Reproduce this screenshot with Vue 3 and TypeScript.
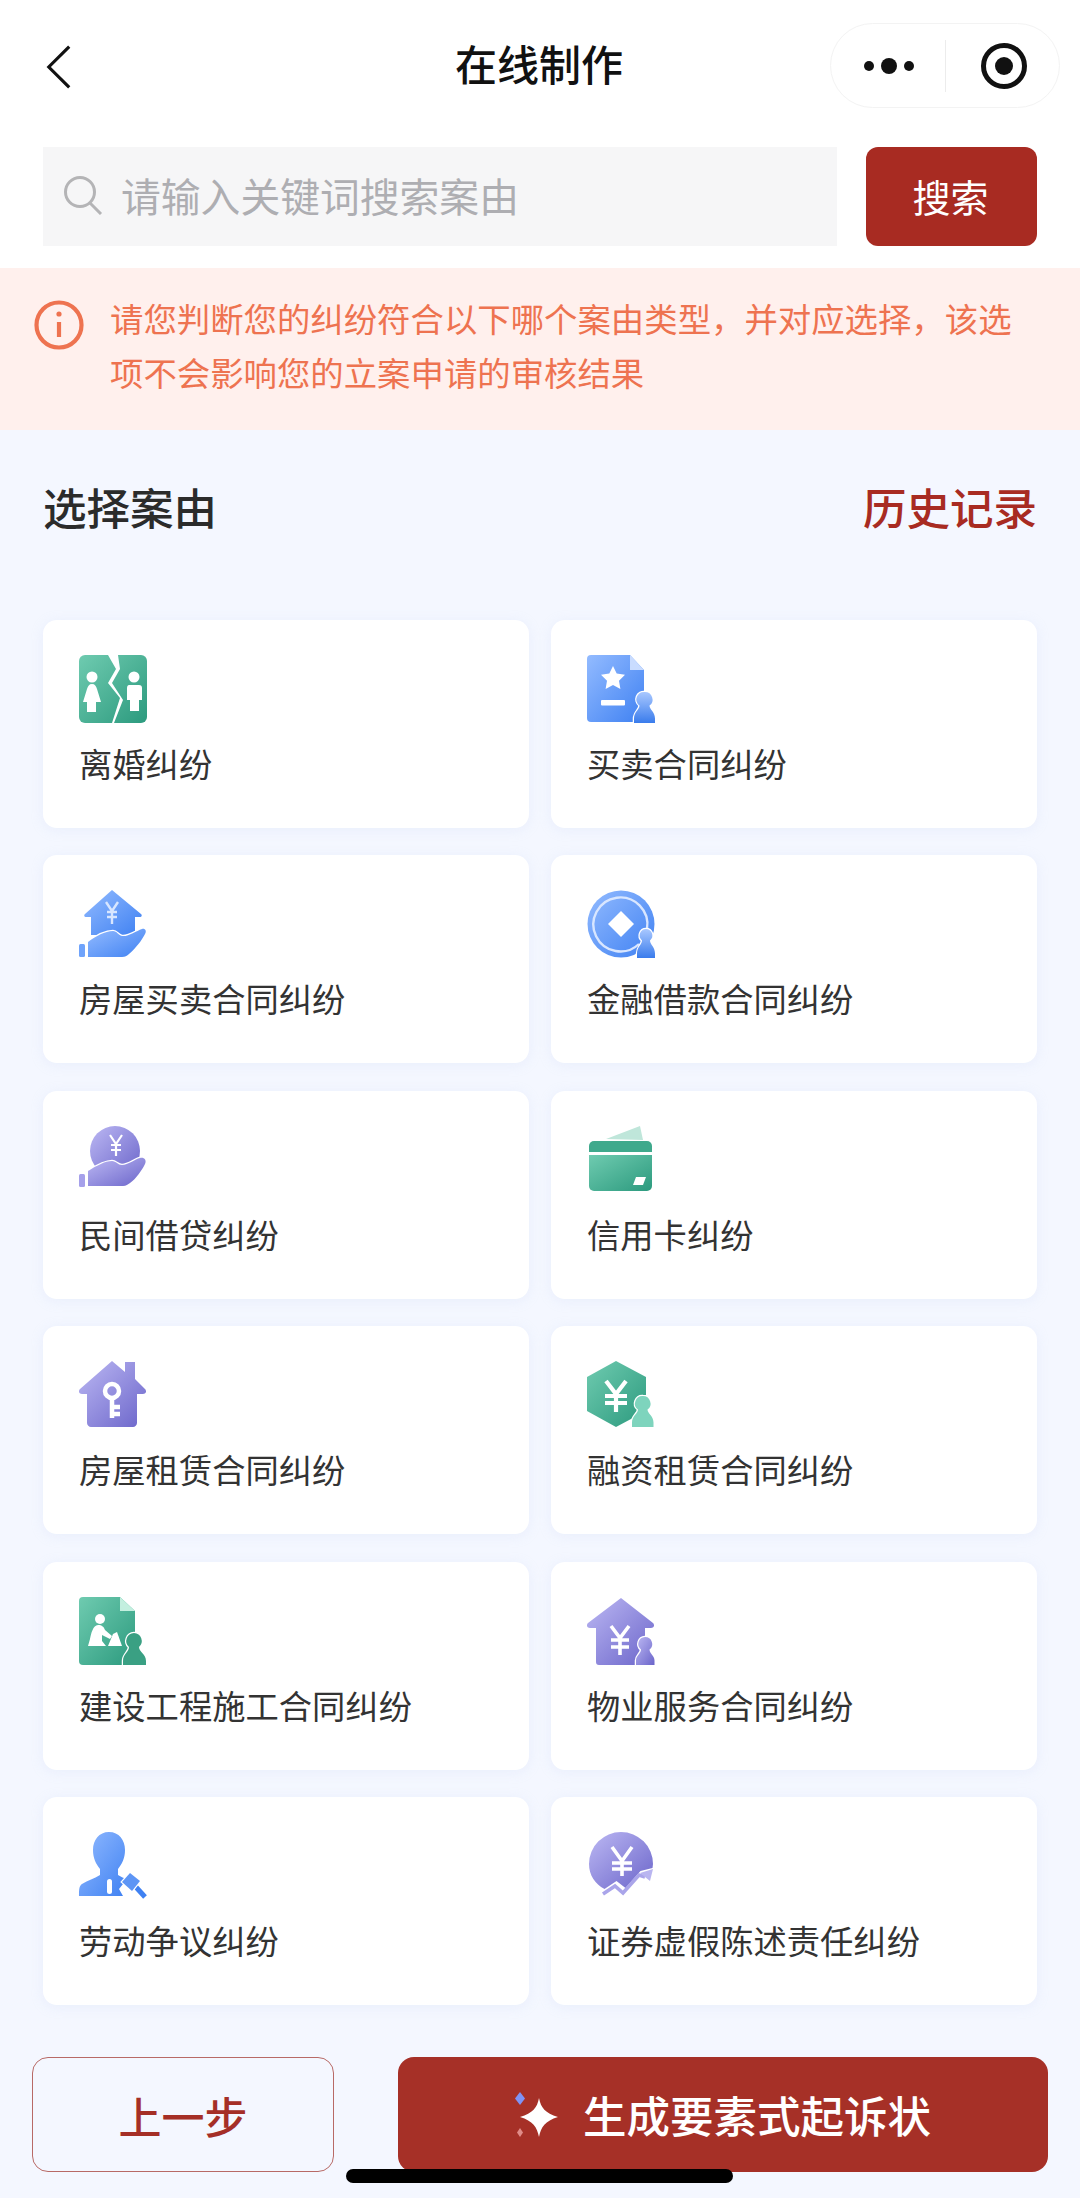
<template>
  <div class="page">
    <svg class="defs" aria-hidden="true">
      <defs>
        <linearGradient id="g-green" x1="0" y1="0" x2="1" y2="1">
          <stop offset="0" stop-color="#6fcbb0" />
          <stop offset="1" stop-color="#2c9a7e" />
        </linearGradient>
        <linearGradient id="g-blue" x1="0" y1="0" x2="1" y2="1">
          <stop offset="0" stop-color="#93bbff" />
          <stop offset="1" stop-color="#3f81f2" />
        </linearGradient>
        <linearGradient id="g-purple" x1="0" y1="0" x2="1" y2="1">
          <stop offset="0" stop-color="#bcb8f3" />
          <stop offset="1" stop-color="#6b65ca" />
        </linearGradient>
        <linearGradient id="g-pawn" x1="0" y1="0" x2="0" y2="1">
          <stop offset="0" stop-color="#a9c8ff" />
          <stop offset="1" stop-color="#3a7cec" />
        </linearGradient>
      </defs>
    </svg>

    <header class="nav">
      <svg class="nav__back" viewBox="0 0 28 48" fill="none" stroke="#111" stroke-width="3.4">
        <path d="M25 2 3 24l22 22" />
      </svg>
      <h1 class="nav__title">在线制作</h1>
      <div class="capsule">
        <svg class="capsule__dots" viewBox="0 0 50 16" fill="#111">
          <circle cx="5" cy="8" r="5" />
          <circle cx="25" cy="8" r="8" />
          <circle cx="45" cy="8" r="5" />
        </svg>
        <span class="capsule__line" />
        <svg class="capsule__target" viewBox="0 0 48 48">
          <circle cx="24" cy="24" r="20.5" fill="none" stroke="#111" stroke-width="5" />
          <circle cx="24" cy="24" r="9" fill="#111" />
        </svg>
      </div>
    </header>

    <div class="search">
      <div class="search__box">
        <svg class="search__icon" viewBox="0 0 40 40" fill="none" stroke="#b4b4b6" stroke-width="3">
          <circle cx="17" cy="17" r="14.5" />
          <path d="m27 28 11 11" />
        </svg>
        <span>请输入关键词搜索案由</span>
      </div>
      <div class="search__btn"><span>搜索</span></div>
    </div>

    <div class="notice">
      <svg class="notice__icon" viewBox="0 0 50 50" fill="none" stroke="#ee7350">
        <circle cx="25" cy="25" r="22.5" stroke-width="4.2" />
        <path d="M25 22v15" stroke-width="4.2" />
        <circle cx="25" cy="14" r="2.6" fill="#ee7350" stroke="none" />
      </svg>
      <p class="notice__text">{{ noticeText }}</p>
    </div>

    <main class="main">
      <div class="section-head">
        <h2 class="section-head__title">选择案由</h2>
        <span class="section-head__link">历史记录</span>
      </div>

      <div class="grid">
        <div v-for="item in items" :key="item.name" class="card">
          <svg class="card__icon" viewBox="0 0 68 68">
            <template v-if="item.icon === 'divorce'">
              <rect width="68" height="68" rx="6" fill="url(#g-green)" />
              <path d="M29 0h10l2 14-8 14 11 17-9 23h-2l8-25-12-15 8-14z" fill="#fff" />
              <circle cx="13" cy="22" r="5.500" fill="#fff" />
              <path d="M13 29c3 0 4 2 5 5l4 13h-5v10H8V47H4l4-13c1-3 2-5 5-5z" fill="#fff" />
              <circle cx="55" cy="22" r="5.500" fill="#fff" />
              <path d="M50 30h10c2 0 3 1 3 3v12h-3v11h-9V45h-3V33c0-2 1-3 2-3z" fill="#fff" />
            </template>

            <template v-else-if="item.icon === 'doc'">
              <path d="M4 0h39l14 15v52H4a4 4 0 0 1-4-4V4a4 4 0 0 1 4-4z" fill="url(#g-blue)" />
              <path d="M43 0l14 15H43z" fill="#c9dcff" />
              <path d="m26 11 3.700 7.600 8.300 1.200-6 5.900 1.400 8.300-7.400-3.900-7.400 3.900 1.400-8.300-6-5.900 8.300-1.200z" fill="#fff" />
              <rect x="14" y="45" width="24" height="5.500" rx="1" fill="#fff" />
              <path class="pawn" fill="url(#g-pawn)" d="M58 37a7.500 7.500 0 0 1 4.500 13.500c0 4 5.500 6.500 5.500 13V68H47v-4.500c0-6.500 5.500-9 5.500-13A7.500 7.500 0 0 1 58 37z" />
            </template>

            <template v-else-if="item.icon === 'house-hand'">
              <path d="M33 0 62 24c1.500 1.500.5 3-1 3h-5v18H12V27H7c-1.500 0-2.500-1.500-1-3z" fill="url(#g-blue)" />
              <path d="m27 12 6 9 6-9M33 21v13M28 22h10M28 27h10" fill="none" stroke="#d8e6ff" stroke-width="2.400" />
              <rect y="54" width="6" height="13" rx="1.500" fill="#6fa3fb" />
              <path class="hand" fill="url(#g-blue)" d="M9 52C17 46 26 41 34 41c4 0 5 4 9 5 6 1 14-5 20-7 3-1 5 2 3 5-3 6-9 14-16 20-2 2-4 3-7 3H9z" />
            </template>

            <template v-else-if="item.icon === 'coin'">
              <circle cx="34" cy="34" r="33.500" fill="url(#g-blue)" />
              <path d="M52 54A27 27 0 1 1 60 39" fill="none" stroke="#d8e6ff" stroke-width="2.400" />
              <path d="m34 21 13 13-13 13-13-13z" fill="#fff" />
              <path class="pawn" fill="url(#g-pawn)" d="M59 39a6.500 6.500 0 0 1 4 11.500c0 4 5 6.500 5 13V68H50v-4.500c0-6.500 5-9 5-13A6.500 6.500 0 0 1 59 39z" />
            </template>

            <template v-else-if="item.icon === 'loan'">
              <circle cx="36" cy="25" r="25" fill="url(#g-purple)" />
              <path d="m31 9 6 9 6-9M37 18v12M32 19h10M32 24h10" fill="none" stroke="#fff" stroke-width="2.200" />
              <rect y="48" width="6" height="13" rx="1.500" fill="#a5a0ea" />
              <path class="hand" fill="url(#g-purple)" d="M9 45C17 40 26 35 33 35c4 0 6 4 10 4 6 0 13-6 18-7 4-1 7 2 5 6-3 6-9 15-15 19-2 1-4 3-7 3H9z" />
            </template>

            <template v-else-if="item.icon === 'card'">
              <path d="M19 13 53 0l3 14z" fill="#bfe6da" />
              <path d="M7 15h53a5 5 0 0 1 5 5v6H2v-6a5 5 0 0 1 5-5z" fill="#3fa98c" />
              <path d="M2 29h63v31a5 5 0 0 1-5 5H7a5 5 0 0 1-5-5z" fill="url(#g-green)" />
              <path d="M49 51h10l-3 8H46z" fill="#fff" />
            </template>

            <template v-else-if="item.icon === 'house-key'">
              <path d="M46 1h10v17l10 10c2 2 1 5-2 5h-6v29c0 2-2 4-4 4H12c-2 0-4-2-4-4V33H3c-3 0-4-3-2-5L33 0l13 11z" fill="url(#g-purple)" />
              <circle cx="33" cy="30" r="7" fill="none" stroke="#fff" stroke-width="4.500" />
              <path d="M33 37v20M33 46h8M33 53h8" fill="none" stroke="#fff" stroke-width="4.500" />
            </template>

            <template v-else-if="item.icon === 'hexagon'">
              <path d="M29 0 59 16v34L29 66 0 50V16z" fill="url(#g-green)" />
              <path d="m19 20 10 13 10-13M29 33v18M18 35h22M18 42h22" fill="none" stroke="#fff" stroke-width="4.200" />
              <path class="pawn" fill="#7ed4bd" d="M56 35a7.500 7.500 0 0 1 4.500 13.500c0 4 6 6.500 6 13V66H45v-4.500c0-6.500 6-9 6-13A7.500 7.500 0 0 1 56 35z" />
            </template>

            <template v-else-if="item.icon === 'build'">
              <path d="M4 0h37l15 14v54H4a4 4 0 0 1-4-4V4a4 4 0 0 1 4-4z" fill="url(#g-green)" />
              <path d="M41 0l15 14H41z" fill="#c3efdf" />
              <circle cx="21" cy="22" r="5" fill="#fff" />
              <path d="M19 28c4 0 6 2 7 5l7 6-2 3-8-4v6l4 5H9l2-7c1-5 3-14 8-14z" fill="#fff" />
              <path d="m29 49 5-12 4-2 5 14z" fill="#fff" />
              <path class="pawn" fill="#3aa083" d="M55 36a8 8 0 0 1 5 14c0 5 7 7 7 14v4H44v-4c0-7 6-9 6-14a8 8 0 0 1 5-14z" />
            </template>

            <template v-else-if="item.icon === 'house-yen'">
              <path d="M34 1 66 26c2 2 1 5-2 5h-6v37H12c-2 0-3-1-3-3V31H3c-3 0-4-3-2-5z" fill="url(#g-purple)" />
              <path d="m24 29 9 12 9-12M33 41v17M24 43h18M24 50h18" fill="none" stroke="#fff" stroke-width="3.600" />
              <path class="pawn" fill="url(#g-purple)" d="M58 40a7 7 0 0 1 4.500 12.500c0 4 5 6 5 11V68H49v-4.500c0-5 5-7 5-11A7 7 0 0 1 58 40z" />
            </template>

            <template v-else-if="item.icon === 'worker'">
              <path d="M30 0c10 0 16 8 16 18 0 8-3 14-7 19v6c3 2 6 3 9 4l-8 10 4 7H0c0-6 0-10 3-12 6-4 12-5 18-9v-6c-4-5-7-11-7-19C14 8 20 0 30 0z" fill="url(#g-blue)" />
              <rect x="28" y="47" width="5" height="15" rx="2.500" fill="#fff" />
              <path d="m56 54 10 11" fill="none" stroke="#3f81f2" stroke-width="5" />
              <path class="gavel" d="m43 50 8-9 10 8-8 10z" fill="#5d95f5" />
            </template>

            <template v-else>
              <path d="M34 0a32 32 0 0 1 32 32l-.5 4-12 3-15 17-9-7-12 8C8 52 2 43 2 32A32 32 0 0 1 34 0z" fill="url(#g-purple)" />
              <path d="m25 15 10 14 10-14M35 29v15M25 31h20M25 37h20" fill="none" stroke="#fff" stroke-width="3.600" />
              <path d="M16 62 28 54l8 7 16-18 6 2" fill="none" stroke="#aaa5ea" stroke-width="3.600" />
              <path d="m53 41 13-4-3 12z" fill="#b9b5f0" />
            </template>
          </svg>
          <span class="card__label">{{ item.name }}</span>
        </div>
      </div>
    </main>

    <footer class="actions">
      <div class="actions__prev">上一步</div>
      <div class="actions__next">
        <svg class="actions__spark" viewBox="0 0 46 46">
          <path d="m7 0 5 6.500-5 6.500-5-6.500z" fill="#7f93f5" />
          <path d="M26 6c2 10 6 15 19 19-13 4-17 10-19 20-2-10-6-16-19-20 13-4 17-9 19-19z" fill="#fff" />
          <path d="m7 36 3 4.500-3 4.500-3-4.500z" fill="#e08c88" />
        </svg>
        <span>生成要素式起诉状</span>
      </div>
    </footer>

    <span class="home-bar" />
  </div>
</template>

<script setup lang="ts">
type Item = { name: string; icon: string };

const noticeText =
  '请您判断您的纠纷符合以下哪个案由类型\uFF0C并对应选择\uFF0C该选项不会影响您的立案申请的审核结果';

const items: Item[] = [
  { name: '离婚纠纷', icon: 'divorce' },
  { name: '买卖合同纠纷', icon: 'doc' },
  { name: '房屋买卖合同纠纷', icon: 'house-hand' },
  { name: '金融借款合同纠纷', icon: 'coin' },
  { name: '民间借贷纠纷', icon: 'loan' },
  { name: '信用卡纠纷', icon: 'card' },
  { name: '房屋租赁合同纠纷', icon: 'house-key' },
  { name: '融资租赁合同纠纷', icon: 'hexagon' },
  { name: '建设工程施工合同纠纷', icon: 'build' },
  { name: '物业服务合同纠纷', icon: 'house-yen' },
  { name: '劳动争议纠纷', icon: 'worker' },
  { name: '证券虚假陈述责任纠纷', icon: 'stock' },
];
</script>

<style>
html,
body {
  margin: 0;
  background: #f4f7ff;
}
</style>

<style scoped>
.page {
  position: relative;
  width: 1080px;
  height: 2198px;
  overflow: hidden;
  display: flex;
  flex-direction: column;
  background: #f4f7ff;
  font-family: 'Liberation Sans', 'Noto Sans CJK SC', sans-serif;
}
.defs {
  position: absolute;
  width: 0;
  height: 0;
}

.nav {
  height: 147px;
  box-sizing: border-box;
  padding: 23px 20px 0 46px;
  display: flex;
  align-items: flex-start;
  background: #fff;
  position: relative;
}
.nav__back {
  width: 26px;
  height: 46px;
  margin-top: 21px;
}
.nav__title {
  position: absolute;
  left: -2px;
  right: 0;
  top: 41px;
  margin: 0;
  text-align: center;
  font-size: 42px;
  line-height: 52px;
  font-weight: 500;
  color: #111;
}
.capsule {
  margin-left: auto;
  width: 230px;
  height: 85px;
  box-sizing: border-box;
  border: 1.5px solid #f3f3f3;
  border-radius: 43px;
  display: flex;
  align-items: center;
  padding-left: 33px;
}
.capsule__dots {
  width: 50px;
  height: 16px;
}
.capsule__line {
  width: 1px;
  height: 52px;
  margin-left: 31px;
  background: #ececec;
}
.capsule__target {
  width: 48px;
  height: 48px;
  margin-left: 34px;
}

.search {
  height: 121px;
  box-sizing: border-box;
  padding: 0 43px 22px;
  display: flex;
  gap: 29px;
  background: #fff;
}
.search__box {
  flex: 1;
  display: flex;
  align-items: center;
  background: #f6f6f7;
  padding-left: 20px;
  padding-bottom: 4px;
  font-size: 39.800px;
  color: #aeaeb2;
}
.search__icon {
  width: 40px;
  height: 40px;
  margin-right: 18px;
}
.search__btn {
  width: 171px;
  padding: 0 2px 3px 0;
  box-sizing: border-box;
  display: flex;
  align-items: center;
  justify-content: center;
  background: #a82b22;
  border-radius: 12px;
  color: #fff;
  font-size: 38px;
}

.notice {
  height: 162px;
  box-sizing: border-box;
  padding: 26px 50px 0 34px;
  display: flex;
  align-items: flex-start;
  background: #fff0ed;
}
.notice__icon {
  width: 50px;
  height: 50px;
  flex: none;
  margin-top: 6px;
}
.notice__text {
  margin: 0 0 0 26px;
  font-size: 33.400px;
  line-height: 54px;
  color: #ee7350;
}

.main {
  flex: 1;
  padding: 0 43px;
}
.section-head {
  height: 190px;
  box-sizing: border-box;
  padding-top: 54px;
  display: flex;
  justify-content: space-between;
  align-items: flex-start;
  font-size: 43.500px;
  line-height: 52px;
}
.section-head__title {
  margin: 0;
  font-size: inherit;
  font-weight: 500;
  color: #2b2b2b;
}
.section-head__link {
  font-weight: 500;
  color: #a82b22;
}
.grid {
  display: grid;
  grid-template-columns: 486px 486px;
  grid-auto-rows: 208px;
  column-gap: 22px;
  row-gap: 27.400px;
}
.card {
  box-sizing: border-box;
  padding: 35px 0 0 36px;
  background: #fff;
  border-radius: 14px;
  box-shadow: 0 2px 12px rgba(205, 215, 245, 0.25);
  display: flex;
  flex-direction: column;
  align-items: flex-start;
}
.card__icon {
  width: 68px;
  height: 68px;
  overflow: visible;
}
.card__label {
  margin-top: 21px;
  font-size: 33.300px;
  line-height: 44px;
  color: #333;
}
.pawn,
.hand,
.gavel {
  stroke: #fff;
  stroke-width: 2.500px;
  paint-order: stroke;
}

.actions {
  position: absolute;
  left: 32px;
  right: 32px;
  top: 2057px;
  height: 115px;
  display: flex;
  gap: 64px;
  font-size: 43px;
  font-weight: 500;
}
.actions__prev {
  width: 302px;
  box-sizing: border-box;
  border: 1.500px solid #b86a66;
  border-radius: 16px;
  display: flex;
  align-items: center;
  justify-content: center;
  color: #a52f27;
}
.actions__next {
  flex: 1;
  box-sizing: border-box;
  padding-right: 2px;
  background: #a63027;
  border-radius: 16px;
  display: flex;
  align-items: center;
  justify-content: center;
  gap: 24px;
  font-size: 43.500px;
  color: #fff;
}
.actions__spark {
  width: 46px;
  height: 46px;
}
.home-bar {
  position: absolute;
  left: 346px;
  top: 2169px;
  width: 387px;
  height: 14px;
  border-radius: 7px;
  background: #000;
}
</style>
